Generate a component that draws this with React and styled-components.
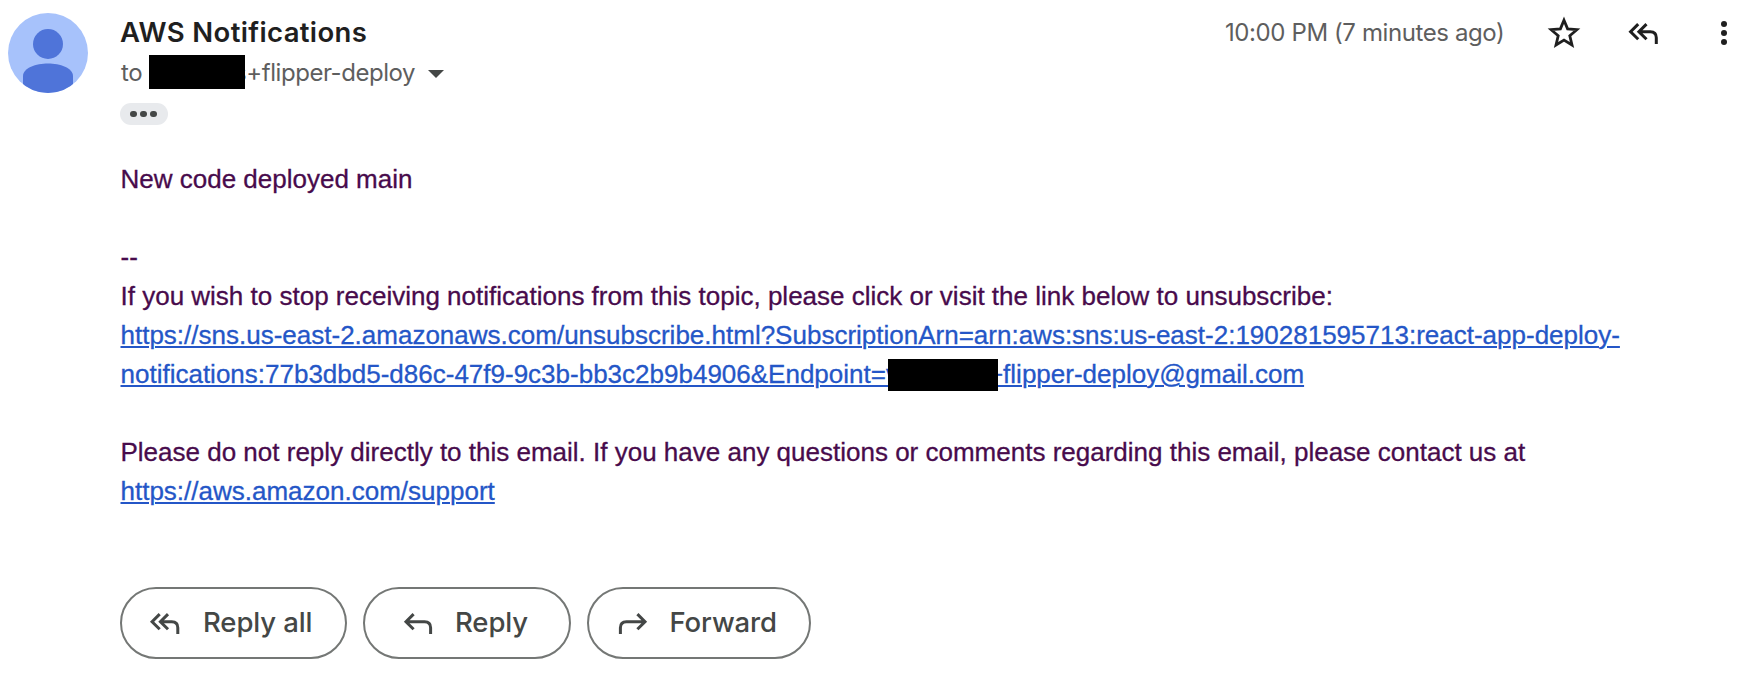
import React from "react";
import styled, { createGlobalStyle, css } from "styled-components";

const GlobalStyle = createGlobalStyle`
  *, *::before, *::after { box-sizing: border-box; }
  body { margin: 0; background: #fff; overflow: hidden; }
`;

const uiFont = css`font-family: Inter, Roboto, sans-serif;`;

const Message = styled.article`
  display: flex;
  width: 1750px;
  height: 682px;
  padding: 13px 0 0 8px;
  background: #fff;
`;

const Avatar = styled.svg`
  flex: none;
  width: 80px;
  height: 80px;
`;

const Content = styled.div`
  flex: 1;
  min-width: 0;
  margin-left: 32px;
`;

const Header = styled.header`
  display: flex;
  justify-content: space-between;
  height: 90px;
`;

const Sender = styled.h3`
  ${uiFont}
  margin: 0;
  height: 40px;
  line-height: 38px;
  font-size: 27.5px;
  font-weight: 600;
  letter-spacing: 0.35px;
  color: #1f1f1f;
  white-space: nowrap;
`;

const Recipient = styled.div`
  ${uiFont}
  display: flex;
  align-items: center;
  height: 38px;
  margin-left: 1px;
  font-size: 24px;
  letter-spacing: -0.45px;
  color: #5e5e5e;
  white-space: nowrap;
`;

const HeaderRedaction = styled.span`
  position: relative;
  width: 96px;
  height: 34px;
  margin: 0 -11px 0 7px;
  background: #000;
`;

const Caret = styled.span`
  margin: 4px 0 0 13px;
  border: 8px solid transparent;
  border-top-color: #444746;
  border-bottom: 0;
`;

const Meta = styled.div`
  display: flex;
  height: 40px;
  align-items: center;
  padding-right: 6px;
`;

const Time = styled.time`
  ${uiFont}
  width: 279px;
  margin-top: -1px;
  font-size: 24px;
  letter-spacing: -0.4px;
  color: #5e5e5e;
  white-space: nowrap;
`;

const HeaderIcon = styled.svg`
  flex: none;
  width: 40px;
  height: 40px;
  margin-left: ${(p) => p.$gap}px;
  color: #1f1f1f;
`;

const Trimmed = styled.button`
  display: flex;
  align-items: center;
  justify-content: center;
  gap: 3.4px;
  width: 48px;
  height: 22px;
  padding: 0 1px 0 0;
  border: 0;
  border-radius: 11px;
  background: #e8eaed;
`;

const Dot = styled.i`
  width: 6.6px;
  height: 6.6px;
  border-radius: 50%;
  background: #444746;
`;

const Body = styled.div`
  margin: 35px 0 0 0.5px;
  font: 26px/39px "Liberation Sans", Arial, sans-serif;
  -webkit-text-stroke: 0.3px currentColor;
  color: #480b4c;
  white-space: nowrap;
`;

const Line = styled.div`
  height: 39px;
`;

const Link = styled.a`
  color: #2456c7;
  text-decoration: underline;
  text-decoration-thickness: 2px;
  text-underline-offset: 2px;
`;

const Redaction = styled.span`
  display: inline-block;
  position: relative;
  width: 110px;
  height: 32px;
  margin: 0 -10px 0 -11px;
  vertical-align: -8px;
  background: #000;
`;

const Actions = styled.div`
  display: flex;
  gap: 16px;
  margin-top: 76px;
`;

const Action = styled.button`
  ${uiFont}
  display: flex;
  align-items: center;
  width: ${(p) => p.$width}px;
  height: 72px;
  padding: 0 0 2px ${(p) => p.$inset}px;
  border: 2px solid #747775;
  border-radius: 36px;
  background: #fff;
  color: #444746;
  font-size: 27.5px;
  font-weight: 500;
  letter-spacing: -0.1px;
  white-space: nowrap;
`;

const ActionIcon = styled.svg`
  flex: none;
  width: 36px;
  height: 36px;
  margin-right: ${(p) => p.$gap}px;
`;

const arrowStroke = { fill: "none", stroke: "currentColor", strokeWidth: 3 };

const ReplyAllPaths = () => (
  <g {...arrowStroke}>
    <path d="M13.7 6.6 6.1 14.2l7.6 7.6M22 6.6l-7.6 7.6 7.6 7.6M14.4 14.2h11.4q6 0 6 6v6.4" />
  </g>
);

const ReplyPaths = () => (
  <g {...arrowStroke}>
    <path d="M13.6 6.6 6 14.2l7.6 7.6M6 14.2h18.6q6 0 6 6v6.4" />
  </g>
);

const actions = [
  { label: "Reply all", width: 227, inset: 24, gap: 21, icon: <ReplyAllPaths /> },
  { label: "Reply", width: 208, inset: 35, gap: 19, icon: <ReplyPaths /> },
  {
    label: "Forward", width: 224, inset: 26, gap: 18.5,
    icon: <g transform="translate(36 0) scale(-1 1)"><ReplyPaths /></g>,
  },
];

export default function App() {
  return (
    <>
      <GlobalStyle />
      <Message>
        <Avatar viewBox="0 0 80 80">
          <clipPath id="avatar"><circle cx="40" cy="40" r="40" /></clipPath>
          <g clipPath="url(#avatar)">
            <rect width="80" height="80" fill="#a7c2fb" />
            <circle cx="40" cy="31" r="15" fill="#4f74d9" />
            <path d="M15 80V63C15 55 28 50.5 40 50.5S65 55 65 63V80Z" fill="#4f74d9" />
          </g>
        </Avatar>
        <Content>
          <Header>
            <div>
              <Sender>AWS Notifications</Sender>
              <Recipient>
                to<HeaderRedaction />s+flipper-deploy<Caret />
              </Recipient>
            </div>
            <Meta>
              <Time>10:00 PM (7 minutes ago)</Time>
              <HeaderIcon $gap={40} viewBox="0 0 40 40">
                <path d="M20 7.2l3.6 8.7 9.3.8-7.1 6.1 2.2 9.2-8-4.9-8 4.9 2.2-9.2-7.1-6.1 9.3-.8z" fill="none" stroke="currentColor" strokeWidth="2.8" />
              </HeaderIcon>
              <HeaderIcon $gap={40} viewBox="0 0 40 40">
                <g transform="translate(0.5 4.5)"><ReplyAllPaths /></g>
              </HeaderIcon>
              <HeaderIcon $gap={40} viewBox="0 0 40 40">
                <g fill="currentColor">
                  <circle cx="20" cy="11" r="3" />
                  <circle cx="20" cy="20" r="3" />
                  <circle cx="20" cy="29" r="3" />
                </g>
              </HeaderIcon>
            </Meta>
          </Header>
          <Trimmed aria-label="Show trimmed content"><Dot /><Dot /><Dot /></Trimmed>
          <Body>
            <Line>New code deployed main</Line>
            <Line />
            <Line>--</Line>
            <Line>If you wish to stop receiving notifications from this topic, please click or visit the link below to unsubscribe:</Line>
            <Line><Link>https://sns.us-east-2.amazonaws.com/unsubscribe.html?SubscriptionArn=arn:aws:sns:us-east-2:190281595713:react-app-deploy-</Link></Line>
            <Line><Link>notifications:77b3dbd5-d86c-47f9-9c3b-bb3c2b9b4906&amp;Endpoint=v<Redaction />+flipper-deploy@gmail.com</Link></Line>
            <Line />
            <Line>Please do not reply directly to this email. If you have any questions or comments regarding this email, please contact us at</Line>
            <Line><Link>https://aws.amazon.com/support</Link></Line>
          </Body>
          <Actions>
            {actions.map((a) => (
              <Action key={a.label} $width={a.width} $inset={a.inset}>
                <ActionIcon $gap={a.gap} viewBox="0 -3.5 36 36">{a.icon}</ActionIcon>
                {a.label}
              </Action>
            ))}
          </Actions>
        </Content>
      </Message>
    </>
  );
}
